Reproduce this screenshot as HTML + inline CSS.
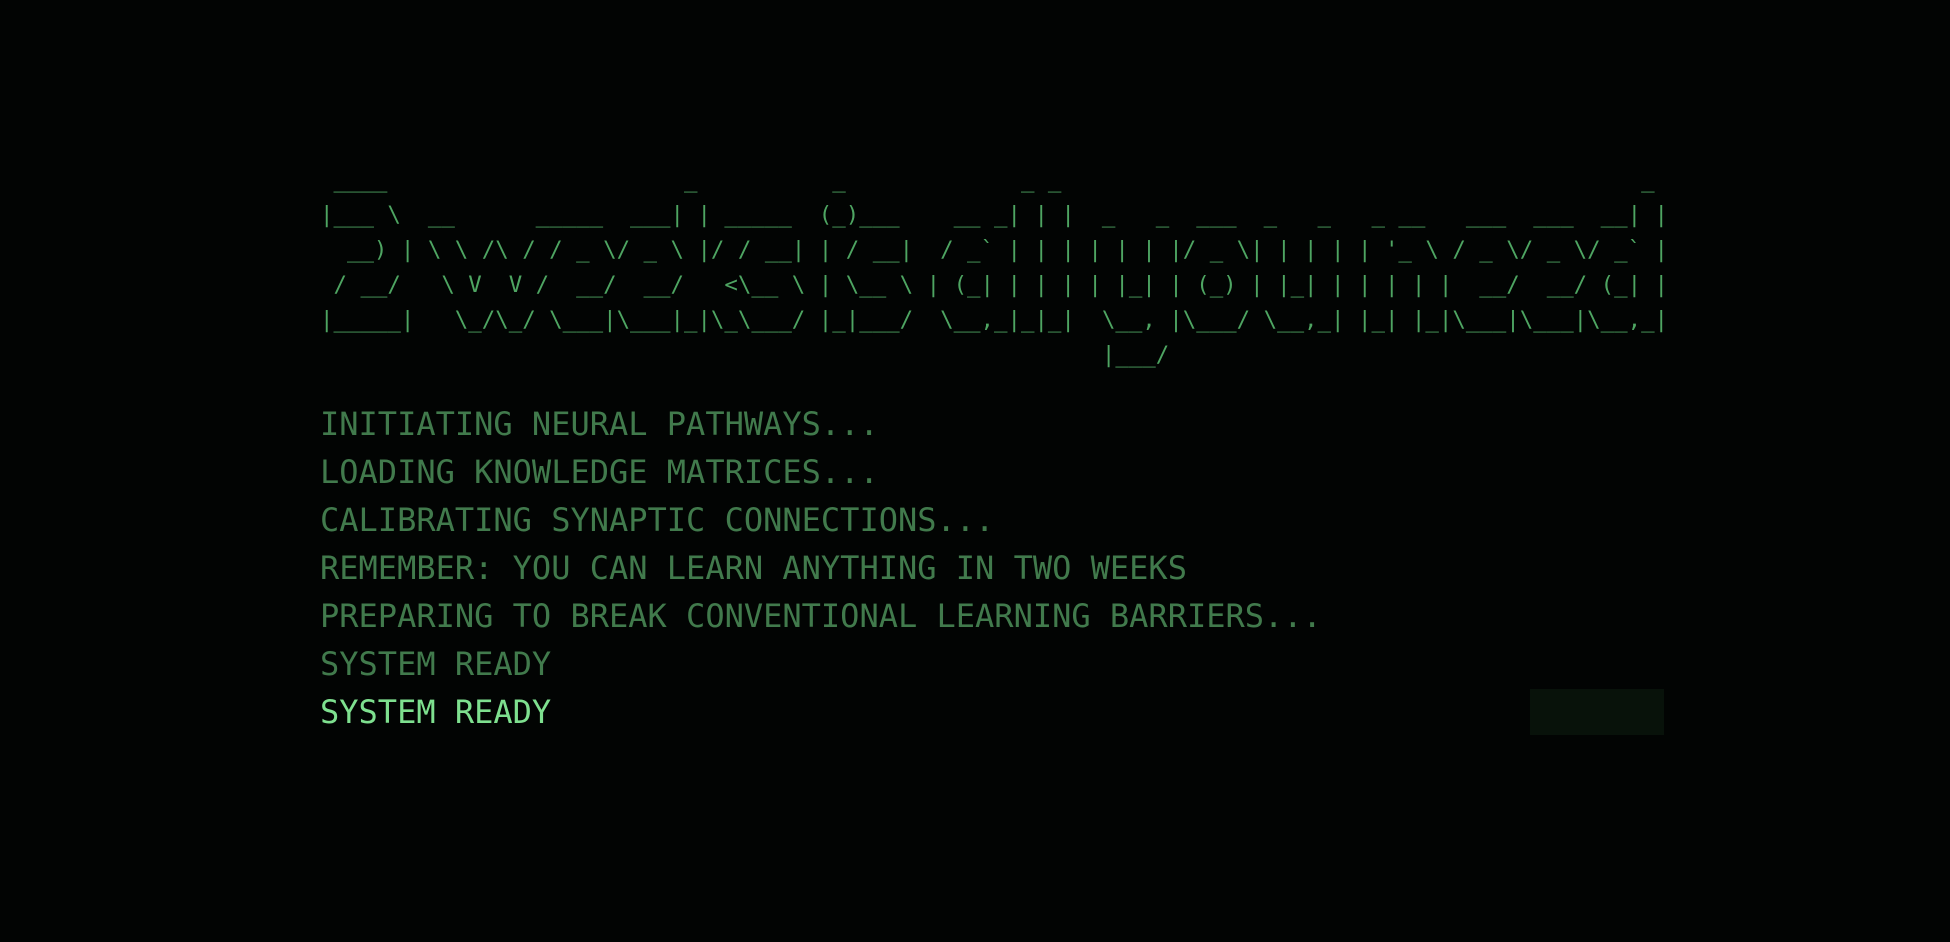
<!DOCTYPE html>
<html><head><meta charset="utf-8"><style>
html,body{margin:0;padding:0;background:#020403;width:1950px;height:942px;overflow:hidden}
pre{margin:0;position:absolute;left:320px;font-family:"DejaVu Sans Mono","Liberation Mono",monospace;white-space:pre}
#art{top:163px;font-size:22.4px;line-height:35px;color:#4ea562}
#log{top:400px;font-size:32px;line-height:48px;color:#417a4c}
.hi{color:#7ee08f}
#box{position:absolute;left:1530px;top:689px;width:134px;height:46px;background:#08120a}
</style></head><body>
<pre id="art"> ____                      _          _             _ _                                           _
|___ \  __      _____  ___| | _____  (_)___    __ _| | |  _   _  ___  _   _   _ __   ___  ___  __| |
  __) | \ \ /\ / / _ \/ _ \ |/ / __| | / __|  / _` | | | | | | |/ _ \| | | | | '_ \ / _ \/ _ \/ _` |
 / __/   \ V  V /  __/  __/   <\__ \ | \__ \ | (_| | | | | |_| | (_) | |_| | | | | |  __/  __/ (_| |
|_____|   \_/\_/ \___|\___|_|\_\___/ |_|___/  \__,_|_|_|  \__, |\___/ \__,_| |_| |_|\___|\___|\__,_|
                                                          |___/</pre>
<pre id="log">INITIATING NEURAL PATHWAYS...
LOADING KNOWLEDGE MATRICES...
CALIBRATING SYNAPTIC CONNECTIONS...
REMEMBER: YOU CAN LEARN ANYTHING IN TWO WEEKS
PREPARING TO BREAK CONVENTIONAL LEARNING BARRIERS...
SYSTEM READY
<span class="hi">SYSTEM READY</span></pre>
<div id="box"></div>
</body></html>
